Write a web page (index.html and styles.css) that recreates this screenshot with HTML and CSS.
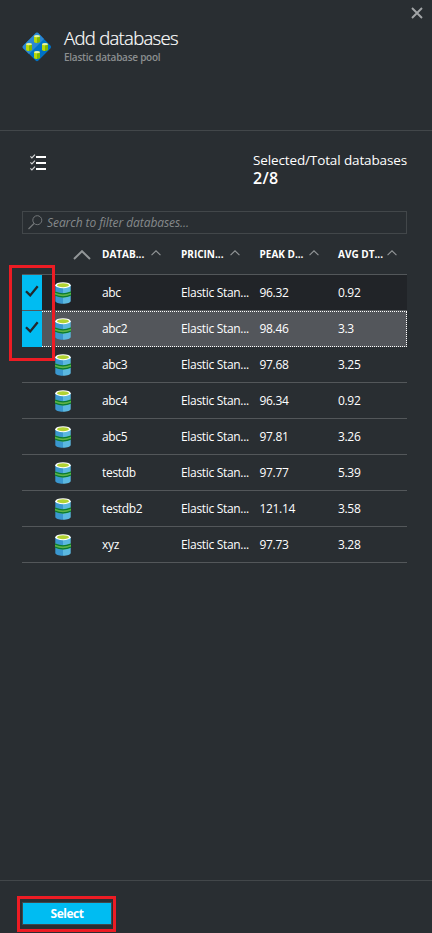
FILE: index.html
```
<!DOCTYPE html>
<html lang="en">
<head>
<meta charset="utf-8">
<title>Add databases</title>
<link rel="stylesheet" href="styles.css">
</head>
<body>
<svg width="0" height="0" class="defs" aria-hidden="true">
  <symbol id="db" viewBox="0 0 16 22" preserveAspectRatio="none">
    <path d="M.3 3v16c0 1.500 3.300 2.700 7.700 2.700V3z" fill="#3a97cf"/>
    <path d="M8 3v18.700c4.400 0 7.700-1.200 7.700-2.700V3z" fill="#5bb8e0"/>
    <ellipse cx="8" cy="3.200" rx="7.700" ry="3" fill="#fff"/>
    <ellipse cx="8" cy="3.200" rx="6" ry="2" fill="#b2d233"/>
    <path d="M0 9.300q8 4 16 0v4.200q-8 4-16 0z" fill="#5fb246"/>
    <path d="M0 10q8 3.600 16 0M0 13.100q8 3.600 16 0" fill="none" stroke="#087a35" stroke-width="1.200"/>
  </symbol>
  <symbol id="caret" viewBox="0 0 18 10"><path d="M1 9 9 1.200 17 9" fill="none" stroke="#929698" stroke-width="2"/></symbol>
  <symbol id="check" viewBox="0 0 14 12"><path d="M1 6.200 5.200 10.400 12.700 1.200" fill="none" stroke="#22282c" stroke-width="2.300"/></symbol>
  <symbol id="pooldb" viewBox="0 0 6 8">
    <path d="M0 1v6q3 1.800 6 0V1z" fill="#7fba00"/><path d="M0 1v6q1.500 1 3 .9V1z" fill="#b8d80a"/><ellipse cx="3" cy="1.200" rx="3" ry="1.100" fill="#e3f3a2"/>
  </symbol>
</svg>
<main class="blade">
  <header class="head">
    <svg class="pool" viewBox="0 0 30 30">
      <rect x="4.500" y="4.500" width="21" height="21" rx="2" fill="#0072c6" transform="rotate(45 15 15)"/>
      <path d="M.8 14 14 .8q1-.8 2 0L22 7 7 22 .8 16q-.8-1 0-2z" fill="#2b88d4"/>
      <use href="#pooldb" x="12" y="3" width="6" height="8"/>
      <use href="#pooldb" x="4" y="11" width="6" height="8"/>
      <use href="#pooldb" x="20" y="11" width="6" height="8"/>
      <use href="#pooldb" x="12" y="19" width="6" height="8"/>
    </svg>
    <div>
      <h1 class="title">Add databases</h1>
      <p class="subtitle">Elastic database pool</p>
    </div>
    <svg class="close" viewBox="0 0 12 12"><path d="m1 1 10 10M11 1 1 11" stroke="#a2a5a7" stroke-width="1.900"/></svg>
  </header>
  <section class="content">
    <div class="summary">
      <svg class="list" viewBox="0 0 16 17">
        <path d="M6 3h10M6 9h10M6 15h10" stroke="#fff" stroke-width="2"/>
        <path d="m.4 2.300 1.500 1.500L5 .6M.4 8.300l1.500 1.500L5 6.600M.4 14.300l1.500 1.500L5 12.600" fill="none" stroke="#d4d6d7" stroke-width="1.200"/>
      </svg>
      <div class="totals"><div class="label">Selected/Total databases</div><div class="count">2/8</div></div>
    </div>
    <div class="search">
      <svg class="glass" viewBox="0 0 15 15"><circle cx="9.300" cy="5.200" r="4.500" fill="none" stroke="#737779"/><path d="M6 8.500.5 14" stroke="#737779" stroke-width="1.200"/></svg>
      <span>Search to filter databases...</span>
    </div>
    <div class="grid">
      <div class="row header">
        <svg class="sort-main"><use href="#caret"/></svg>
        <div class="cell name">DATAB...<svg class="sort"><use href="#caret"/></svg></div>
        <div class="cell">PRICIN...<svg class="sort"><use href="#caret"/></svg></div>
        <div class="cell">PEAK D...<svg class="sort"><use href="#caret"/></svg></div>
        <div class="cell">AVG DT...<svg class="sort"><use href="#caret"/></svg></div>
      </div>
      <div class="row checked"><div class="mark"><svg><use href="#check"/></svg></div><svg class="db"><use href="#db"/></svg><div class="cell name">abc</div><div class="cell">Elastic Stan...</div><div class="cell">96.32</div><div class="cell">0.92</div></div>
      <div class="row focused"><div class="mark"><svg><use href="#check"/></svg></div><svg class="db"><use href="#db"/></svg><div class="cell name">abc2</div><div class="cell">Elastic Stan...</div><div class="cell">98.46</div><div class="cell">3.3</div></div>
      <div class="row"><svg class="db"><use href="#db"/></svg><div class="cell name">abc3</div><div class="cell">Elastic Stan...</div><div class="cell">97.68</div><div class="cell">3.25</div></div>
      <div class="row"><svg class="db"><use href="#db"/></svg><div class="cell name">abc4</div><div class="cell">Elastic Stan...</div><div class="cell">96.34</div><div class="cell">0.92</div></div>
      <div class="row"><svg class="db"><use href="#db"/></svg><div class="cell name">abc5</div><div class="cell">Elastic Stan...</div><div class="cell">97.81</div><div class="cell">3.26</div></div>
      <div class="row"><svg class="db"><use href="#db"/></svg><div class="cell name">testdb</div><div class="cell">Elastic Stan...</div><div class="cell">97.77</div><div class="cell">5.39</div></div>
      <div class="row"><svg class="db"><use href="#db"/></svg><div class="cell name">testdb2</div><div class="cell">Elastic Stan...</div><div class="cell">121.14</div><div class="cell">3.58</div></div>
      <div class="row"><svg class="db"><use href="#db"/></svg><div class="cell name">xyz</div><div class="cell">Elastic Stan...</div><div class="cell">97.73</div><div class="cell">3.28</div></div>
      <div class="callout callout-rows"></div>
    </div>
  </section>
  <footer class="foot">
    <button class="select">Select</button>
    <div class="callout callout-select"></div>
  </footer>
</main>
</body>
</html>
```
FILE: styles.css
```
* { box-sizing: border-box; }
body { margin: 0; background: #292e32; color: #fff; font-family: "Open Sans", "Noto Sans", sans-serif; font-size: 12px; }
svg { display: block; flex: none; }
.defs { position: absolute; }
.blade { width: 432px; height: 933px; display: flex; flex-direction: column; overflow: hidden; }
.head { height: 131px; padding: 26px 0 0 22px; display: flex; align-items: flex-start; gap: 12px; border-bottom: 1px solid #42474a; position: relative; }
.pool { width: 30px; height: 30px; margin-top: 6px; }
.title { margin: 0; font-size: 18.500px; font-weight: 300; line-height: 24px; letter-spacing: -.7px; white-space: nowrap; -webkit-text-stroke: .2px #fff; }
.subtitle { margin: 0; font-size: 10px; font-weight: 600; line-height: 14px; color: #8b8e90; letter-spacing: -.25px; }
.close { position: absolute; right: 9px; top: 7px; width: 12px; height: 12px; }
.content { flex: 1; padding: 0 25px 0 22px; }
.summary { height: 80px; display: flex; justify-content: space-between; padding: 20px 0 0 8px; }
.list { width: 16px; height: 17px; margin-top: 3px; }
.totals { width: 154px; white-space: nowrap; }
.label { font-size: 13.500px; line-height: 19px; letter-spacing: -.13px; }
.count { font-size: 16px; font-weight: 600; line-height: 17px; letter-spacing: .3px; }
.search { height: 23px; border: 1px solid #42474a; display: flex; align-items: center; gap: 4px; padding-left: 5px; color: #85898b; font-style: italic; letter-spacing: -.07px; }
.glass { width: 15px; height: 15px; margin-top: -1px; }
.grid { position: relative; }
.row { height: 36px; display: grid; grid-template-columns: 20px 60px 79px 78.500px 78.500px 69px; align-items: center; border-bottom: 1px solid #53575a; }
.header { height: 41px; font-size: 10px; font-weight: 700; }
.sort-main { width: 18px; height: 10px; grid-column: 2; margin: 1px 0 0 31px; }
.cell { white-space: nowrap; letter-spacing: -.32px; }
.name { grid-column: 3; }
.header .cell { position: relative; letter-spacing: 0; }
.sort { position: absolute; left: 49px; top: 3px; width: 10px; height: 6px; }
.mark { grid-column: 1; align-self: stretch; background: #00bcf2; padding: 10px 0 0 3px; }
.mark svg { width: 14px; height: 12px; }
.db { grid-column: 2; width: 16px; height: 22px; margin-left: 13px; }
.checked { background: #212428; }
.focused { border-bottom-color: transparent; background: #53565b; position: relative; }
.focused .mark { margin-bottom: -1px; }
.focused::after { content: ""; position: absolute; inset: 0 0 -1px 20px; border: 1px dotted #fff; border-left: 0; box-shadow: inset 0 0 0 0 #000; }
.callout { position: absolute; border: 3px solid #ed1c24; }
.callout-rows { left: -13px; top: 31px; width: 46px; height: 96px; }
.foot { height: 53px; border-top: 1px solid #42474a; padding: 21px 0 0 22px; position: relative; }
.select { display: block; width: 90px; height: 23px; padding: 0; background: #00bcf2; border: 1px solid #42474a; color: #fff; font: 700 12px/21px "Open Sans", sans-serif; letter-spacing: -.5px; }
.callout-select { left: 17px; top: 15px; width: 99px; height: 36px; }
```
